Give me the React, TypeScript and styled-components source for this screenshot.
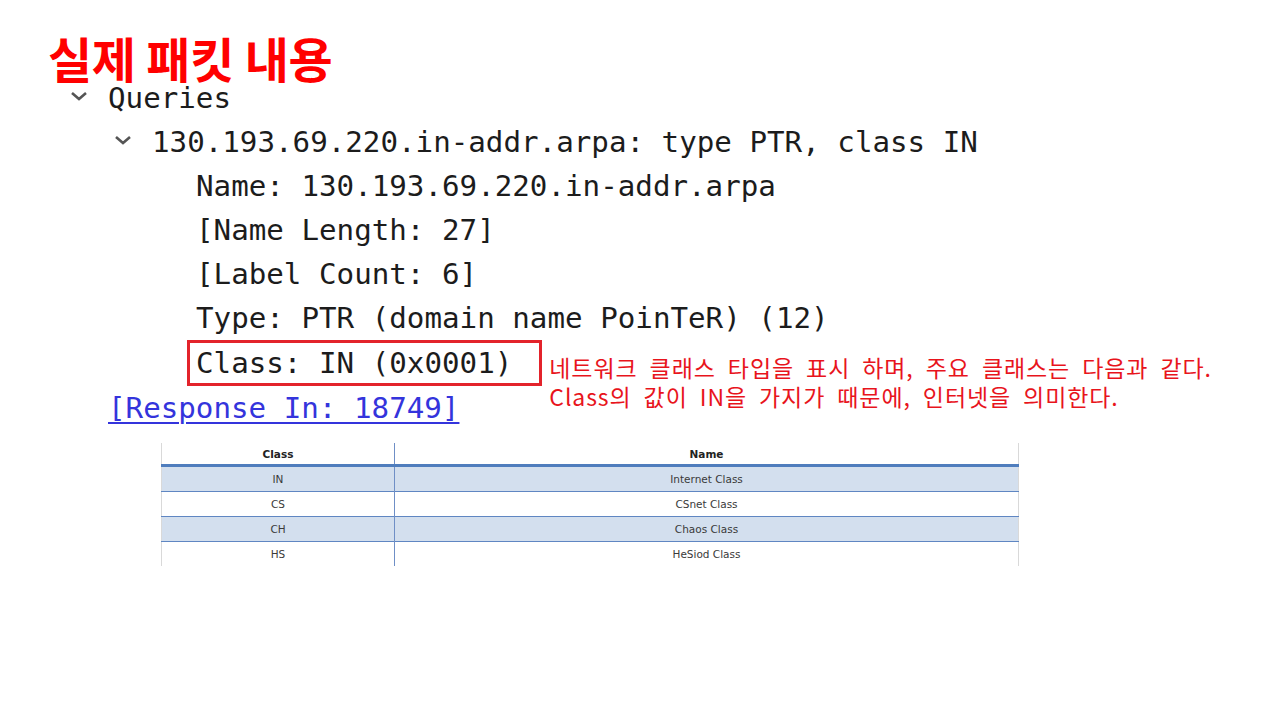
import React, { ReactNode } from "react";
import styled, { createGlobalStyle } from "styled-components";

const GlobalStyle = createGlobalStyle`
  html, body {
    margin: 0;
    padding: 0;
    background: #ffffff;
  }
  body {
    width: 1280px;
    height: 720px;
    overflow: hidden;
    font-family: "Noto Sans CJK KR", "Noto Sans", sans-serif;
  }
`;

type TreeLine = {
  text: string;
  x: number;
  open?: boolean;
};

const lines: TreeLine[] = [
  { text: "Queries", x: 108, open: true },
  { text: "130.193.69.220.in-addr.arpa: type PTR, class IN", x: 152, open: true },
  { text: "Name: 130.193.69.220.in-addr.arpa", x: 196 },
  { text: "[Name Length: 27]", x: 196 },
  { text: "[Label Count: 6]", x: 196 },
  { text: "Type: PTR (domain name PoinTeR) (12)", x: 196 },
];

const noteLines = [
  "네트워크 클래스 타입을 표시 하며, 주요 클래스는 다음과 같다.",
  "Class의 값이 IN을 가지가 때문에, 인터넷을 의미한다.",
];

const classes = [
  { code: "IN", name: "Internet Class" },
  { code: "CS", name: "CSnet Class" },
  { code: "CH", name: "Chaos Class" },
  { code: "HS", name: "HeSiod Class" },
];

function Chevron() {
  return (
    <ChevronIcon viewBox="0 0 18 10" width="18" height="10">
      <polyline points="2,2 9,8 16,2" fill="none" stroke="#555" strokeWidth="2.6" />
    </ChevronIcon>
  );
}

function Row(props: { x: number; open?: boolean; height?: number; children: ReactNode }) {
  return (
    <TreeRow $x={props.x} $h={props.height ?? 44}>
      {props.open && <Chevron />}
      {props.children}
    </TreeRow>
  );
}

export default function App() {
  return (
    <Page>
      <GlobalStyle />
      <Title>실제 패킷 내용</Title>
      <Tree>
        {lines.map((l) => (
          <Row key={l.text} x={l.x} open={l.open}>
            {l.text}
          </Row>
        ))}
        <Row x={196} height={46}>
          <Highlight>Class: IN (0x0001)</Highlight>
          <Note>
            {noteLines.map((t) => (
              <NoteLine key={t}>{t}</NoteLine>
            ))}
          </Note>
        </Row>
        <Row x={108}>
          <LinkText>[Response In: 18749]</LinkText>
        </Row>
      </Tree>
      <ClassTable>
        <thead>
          <tr>
            <Th>Class</Th>
            <Th>Name</Th>
          </tr>
        </thead>
        <tbody>
          {classes.map((c, i) => (
            <BodyRow key={c.code} $shade={i % 2 === 0}>
              <Td>{c.code}</Td>
              <Td>{c.name}</Td>
            </BodyRow>
          ))}
        </tbody>
      </ClassTable>
    </Page>
  );
}

const Page = styled.div`
  display: flex;
  flex-direction: column;
  width: 1280px;
  height: 720px;
`;

const Title = styled.h1`
  margin: 37px 0 2px 48px;
  font-family: "Noto Sans CJK KR", sans-serif;
  font-size: 48px;
  font-weight: 700;
  line-height: 40px;
  color: #ff0000;
  letter-spacing: -0.3px;
`;

const Tree = styled.div`
  display: flex;
  flex-direction: column;
  margin-top: -3px;
  font-family: "DejaVu Sans Mono", "Liberation Mono", monospace;
  font-size: 29.2px;
  line-height: 34px;
  color: #1c1c1c;
`;

const TreeRow = styled.div<{ $x: number; $h: number }>`
  display: flex;
  align-items: center;
  height: ${(p) => p.$h}px;
  padding-left: ${(p) => p.$x}px;
  white-space: nowrap;
`;

const ChevronIcon = styled.svg`
  flex: none;
  margin-left: -38px;
  margin-right: 20px;
  margin-top: -5px;
`;

const Highlight = styled.span`
  align-self: stretch;
  display: flex;
  align-items: center;
  margin-left: -9px;
  padding: 0 27px 0 6px;
  border: 3px solid #e3232b;
`;

const Note = styled.div`
  align-self: flex-start;
  display: flex;
  flex-direction: column;
  margin: 13px 0 0 7px;
  font-family: "Noto Sans CJK KR", sans-serif;
  font-size: 23px;
  letter-spacing: 0.9px;
  word-spacing: 6px;
  color: #e8141c;
  white-space: nowrap;
`;

const NoteLine = styled.div`
  height: 29px;
  line-height: 29px;
`;

const LinkText = styled.span`
  color: #3434dc;
  text-decoration: underline;
  text-underline-offset: 4px;
  text-decoration-thickness: 2px;
`;

const ClassTable = styled.table`
  margin: 13px 0 0 161px;
  width: 858px;
  border-collapse: collapse;
  border-left: 1px solid #d9d9d9;
  border-right: 1px solid #d9d9d9;
  font-family: "DejaVu Sans", Verdana, sans-serif;
  font-size: 10.5px;
  color: #3a3a3a;

  & td:first-child,
  & th:first-child {
    width: 232px;
    border-right: 1px solid #6f8fc6;
  }
`;

const Th = styled.th`
  height: 21px;
  padding: 0;
  font-weight: 700;
  color: #222;
  text-align: center;
  border-bottom: 3px solid #4f7dbd;
`;

const BodyRow = styled.tr<{ $shade: boolean }>`
  background: ${(p) => (p.$shade ? "#d3dfee" : "#ffffff")};
  &:not(:last-child) {
    border-bottom: 1px solid #5f86c2;
  }
`;

const Td = styled.td`
  height: 24px;
  padding: 0;
  text-align: center;
`;
